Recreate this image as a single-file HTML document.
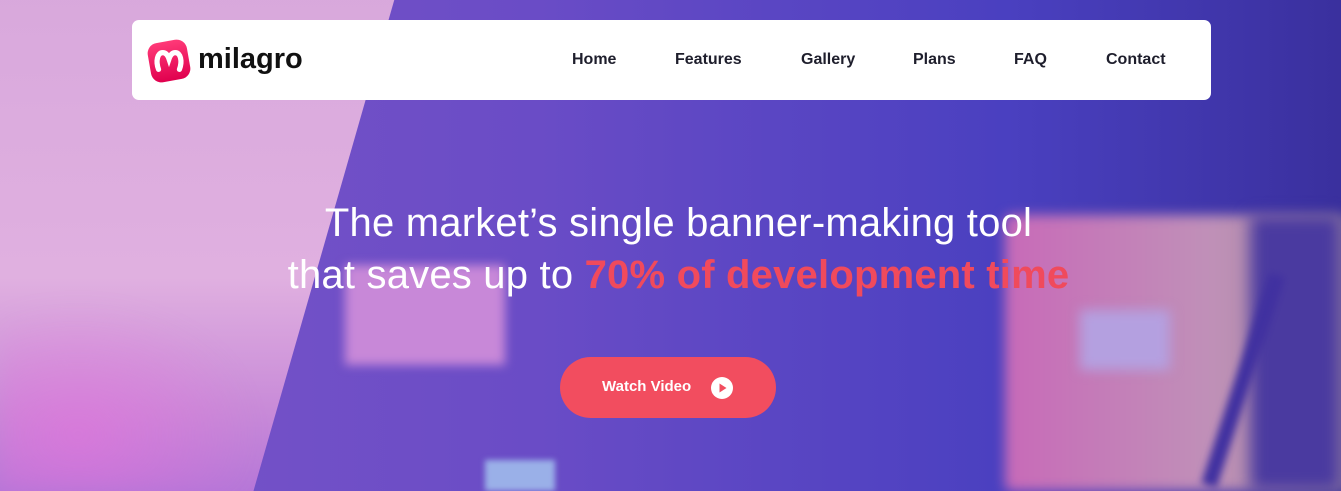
<!DOCTYPE html>
<html><head><meta charset="utf-8"><style>
html,body{margin:0;padding:0;width:1341px;height:491px;overflow:hidden}
body{position:relative;font-family:"Liberation Sans",Arial,sans-serif;background:#4a3cb8}
.bg{position:absolute;left:0;top:0;width:1341px;height:491px;overflow:hidden}
.b{position:absolute}
.nav{position:absolute;left:132px;top:20px;width:1079px;height:80px;background:#fff;border-radius:7px}
.nav a{position:absolute;top:31px;font-weight:bold;font-size:16px;color:#1e1e2c;text-decoration:none}
h1{position:absolute;left:8px;width:1341px;top:197px;margin:0;text-align:center;color:#fff;font-weight:normal;font-size:40px;line-height:52px;letter-spacing:0.2px}
h1 b{color:#f04a5c}
.btn{position:absolute;left:560px;top:357px;width:216px;height:61px;border-radius:31px;background:#f24d5f;color:#fff;font-weight:bold;font-size:15px}
</style></head><body>
<div class="bg">
  <div class="b" style="left:0;top:0;width:1341px;height:491px;background:linear-gradient(90deg,#7a55c8 0%,#6a4cc6 40%,#4a40c0 75%,#3a309e 100%)"></div>
  <div class="b" style="top:-20px;width:480px;height:540px;background:linear-gradient(180deg,#d8a8dc 0%,#e0b0e0 55%,#c88ad8 80%,#b070d8 100%);transform:skewX(-16deg);transform-origin:0 0;left:-80px"></div>
  <div class="b" style="left:0;top:300px;width:260px;height:191px;background:radial-gradient(ellipse at 30% 70%,rgba(235,110,220,.5),rgba(235,110,220,0) 70%);filter:blur(10px)"></div>
  <div class="b" style="left:345px;top:265px;width:160px;height:100px;background:#c888d8;filter:blur(5px)"></div>
  <div class="b" style="left:1005px;top:215px;width:340px;height:276px;background:linear-gradient(90deg,#c86ab8,#c090b8 60%,#a08c9c);filter:blur(6px);border-radius:6px"></div>
  <div class="b" style="left:1250px;top:215px;width:91px;height:276px;background:#4a3aa0;filter:blur(8px)"></div>
  <div class="b" style="left:1080px;top:310px;width:90px;height:60px;background:#b4a0e0;filter:blur(6px)"></div>
  <div class="b" style="left:1235px;top:270px;width:16px;height:221px;background:#4030a0;transform:rotate(18deg);filter:blur(4px)"></div>
  <div class="b" style="left:485px;top:460px;width:70px;height:31px;background:#9ab0e8;filter:blur(3px)"></div>
</div>
<div class="nav">
  <svg style="position:absolute;left:14px;top:18px" width="46" height="46" viewBox="0 0 44 44">
    <defs><linearGradient id="g" x1="0" y1="0" x2="0" y2="1"><stop offset="0" stop-color="#ff3a78"/><stop offset="1" stop-color="#e0004e"/></linearGradient></defs>
    <rect x="3" y="3" width="38" height="38" rx="10" fill="url(#g)" transform="rotate(-10 22 22)"/>
    <path d="M12 30 C9 22 11 14 16 14 C19 14 21 17 22 20 C23 17 25 14 28 14 C33 14 35 22 32 30" fill="none" stroke="#fff" stroke-width="5" stroke-linecap="round"/>
  </svg>
  <div style="position:absolute;left:66px;top:23px;font-size:29px;font-weight:bold;color:#111">milagro</div>
  <a style="left:440px">Home</a>
  <a style="left:543px">Features</a>
  <a style="left:669px">Gallery</a>
  <a style="left:781px">Plans</a>
  <a style="left:882px">FAQ</a>
  <a style="left:974px">Contact</a>
</div>
<h1>The market’s single banner-making tool<br>that saves up to <b>70% of development time</b></h1>
<div class="btn"><span style="position:absolute;left:42px;top:21px">Watch Video</span>
<svg style="position:absolute;left:151px;top:20px" width="22" height="22" viewBox="0 0 22 22"><circle cx="11" cy="11" r="11" fill="#fff"/><path d="M8.5 6.5 L15.5 11 L8.5 15.5Z" fill="#f24d5f"/></svg></div>
</body></html>
